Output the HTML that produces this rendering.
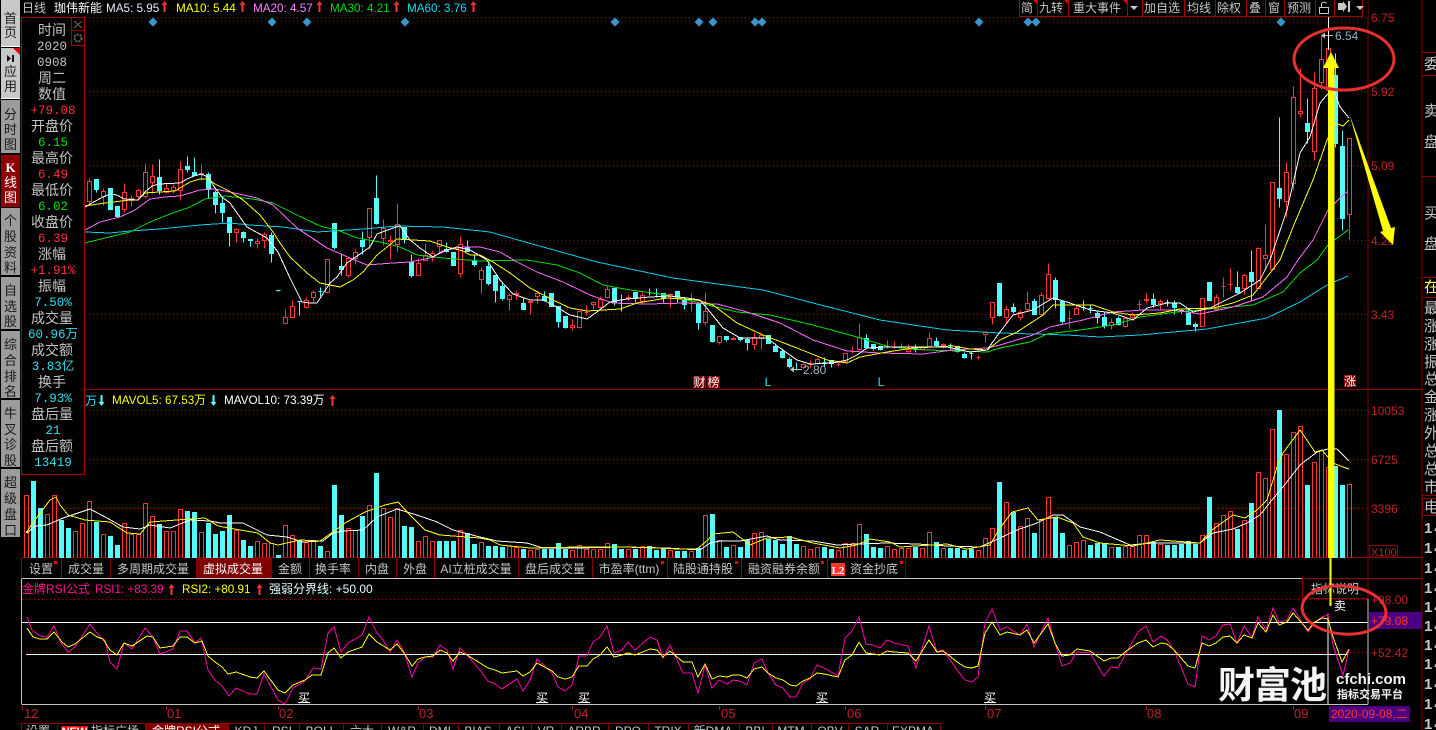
<!DOCTYPE html>
<html><head><meta charset="utf-8"><title>K线</title>
<style>
html,body{margin:0;padding:0;background:#000;width:1436px;height:730px;overflow:hidden}
svg{display:block}
text{font-family:"Liberation Sans","Noto Sans CJK SC",sans-serif;font-size:12px}
.m{font-family:"Liberation Mono","Noto Sans CJK SC",monospace;font-size:12.5px}
.l{fill:#c4c4c4;font-size:14px;text-anchor:middle}
.g{fill:none;stroke:#a00000;stroke-dasharray:1 3}
.t{fill:#c8c8c8;text-anchor:middle}
.a{fill:#c42222}
.s{fill:#1a1a1a;font-size:13px;text-anchor:middle}
.c{fill:#c8c8c8;font-size:15px}
.h{font-size:11.7px}
.f{font-size:15px;font-weight:bold;letter-spacing:2px;fill:#c8c8c8}
.o{font-size:13px;fill:#c42222}
</style></head><body>
<svg width="1436" height="730" viewBox="0 0 1436 730" xmlns="http://www.w3.org/2000/svg">
<rect width="1436" height="730" fill="#000"/>

<!-- grid -->
<g transform="translate(0,.5)">
<path class="g" d="M85 17H1368M85 91H1368M85 165H1368M85 240H1368M85 314H1368M85 410H1368M85 459H1368M22 508H1368M22 599H1368M22 652H1368"/>
<path fill="none" stroke="#8c0000" d="M22 389H1422M22 557H1422M22 578H1302M1368 0V578M1422 0V730M1368 578H1422M1422 52H1436M1422 75H1436M1422 176H1436M1422 277H1436M1422 297H1436M1422 495H1436"/>
</g>

<!-- candles: red -->
<g transform="translate(.5,.5)" fill="none" stroke="#ff3434" shape-rendering="crispEdges">
<path d="M89 178V181M87 181h4V201h-4zM89 201V205M103 188V191M101 191h4V196h-4zM103 196V205M124 183V192M122 192h4V209h-4zM124 209V212M131 195V198M129 198h4V200h-4zM131 200V206M138 188V190M136 190h4V196h-4zM138 196V200M145 163V172M143 172h4V196h-4zM145 196V198M152 164V176M150 176h4V182h-4zM152 182V193M166 183V188M164 188h4V192h-4zM166 192V193M173 184V187M171 187h4V190h-4zM173 190V193M180 161V169M178 169h4V190h-4zM180 190V200M201 164V173M199 173h4V174h-4zM201 174V180M236 228V229M234 229h4V232h-4zM236 232V242M257 238V241M255 241h4V243h-4zM257 243V248M264 232V234M262 234h4V240h-4zM264 240V248"/>
<path d="M285 309V317M283 317h4V323h-4zM292 300V306M290 306h4V317h-4zM306 297V300M304 300h4V307h-4zM306 307V308M313 290V292M311 292h4V297h-4zM313 297V302M325 259h4V292h-4zM346 258h4V275h-4zM348 275V277M355 249V252M353 252h4V258h-4zM355 258V264M367 208h4V237h-4zM369 237V249M383 219V228M381 228h4V238h-4zM383 238V245M390 235V240M388 240h4V241h-4zM390 241V259M397 203V224M395 224h4V244h-4zM397 244V252M418 258V263M416 263h4V275h-4zM425 243V255M423 255h4V260h-4zM425 260V261M432 250V253M430 253h4V257h-4zM432 257V261M437 240h4V246h-4zM439 246V252M460 236V244M458 244h4V273h-4zM460 273V277M481 267V270M479 270h4V279h-4zM481 279V293M509 293V295M507 295h4V299h-4zM509 299V310M516 290V293M514 293h4V294h-4zM516 294V299M528 301h4V302h-4zM530 302V314M537 292V293M535 293h4V296h-4zM537 296V303"/>
<path d="M572 319V325M570 325h4V327h-4zM572 327V330M577 311h4V327h-4zM579 327V328M586 305V312M584 312h4V312h-4zM586 312V315M593 301V302M591 302h4V304h-4zM593 304V309M600 296V299M598 299h4V307h-4zM600 307V309M607 285V289M605 289h4V297h-4zM607 297V298M628 294V297M626 297h4V298h-4zM628 298V300M642 292V295M640 295h4V301h-4zM642 301V304M670 293V294M668 294h4V296h-4zM670 296V307M691 293V303M689 303h4V303h-4zM691 303V311M705 292V311M703 311h4V322h-4zM705 322V325M717 336h4V342h-4zM719 342V344M733 336V338M731 338h4V339h-4zM754 332V337M752 337h4V344h-4zM754 344V349M761 333V335M759 335h4V338h-4zM761 338V349M803 363V364M801 364h4V367h-4zM803 367V369M810 360V364M808 364h4V364h-4zM810 364V368M817 357V359M815 359h4V363h-4zM817 363V364M838 362V364M836 364h4V364h-4zM838 364V366M843 353h4V361h-4zM845 361V363M852 346V351M850 351h4V351h-4zM852 351V353M859 323V337M857 337h4V349h-4zM859 349V350M887 340V346M885 346h4V346h-4zM887 346V348M894 341V347M892 347h4V347h-4zM894 347V348M901 343V347M899 347h4V347h-4zM901 347V348M908 344V349M906 349h4V351h-4zM908 351V353M920 347h4V349h-4zM922 349V350M929 332V338M927 338h4V346h-4zM929 346V347M943 343V344M941 344h4V345h-4zM943 345V348M978 355V357M976 357h4V357h-4zM978 357V359M983 332h4V334h-4zM985 334V342M990 302h4V317h-4zM992 317V324"/>
<path d="M1006 305V309M1004 309h4V317h-4zM1006 317V322M1020 310V312M1018 312h4V317h-4zM1020 317V320M1027 291V303M1025 303h4V309h-4zM1027 309V310M1041 292V295M1039 295h4V314h-4zM1048 263V274M1046 274h4V298h-4zM1048 298V299M1069 310V318M1067 318h4V318h-4zM1069 318V328M1076 305V308M1074 308h4V314h-4zM1111 318V322M1109 322h4V325h-4zM1111 325V329M1125 317V318M1123 318h4V326h-4zM1125 326V327M1132 312V314M1130 314h4V317h-4zM1132 317V319M1139 300V304M1137 304h4V304h-4zM1139 304V309M1146 293V299M1144 299h4V300h-4zM1146 300V303M1160 299V301M1158 301h4V303h-4zM1160 303V309M1200 298h4V326h-4zM1216 294V297M1214 297h4V309h-4zM1223 277V286M1221 286h4V286h-4zM1223 286V297M1230 268V284M1228 284h4V284h-4zM1230 284V290M1244 273V275M1242 275h4V288h-4zM1244 288V294M1258 247V248M1256 248h4V288h-4zM1265 224V255M1263 255h4V258h-4zM1265 258V270M1270 182h4V269h-4zM1286 162V172M1284 172h4V201h-4zM1286 201V217M1293 86V97M1291 97h4V183h-4zM1293 183V190M1300 68V111M1298 111h4V113h-4zM1300 113V117M1314 72V88M1312 88h4V151h-4zM1314 151V160M1321 35V59M1319 59h4V82h-4zM1321 82V89M1328 35V48M1326 48h4V90h-4zM1347 138h4V214h-4zM1349 214V239"/>
</g>
<!-- candles: cyan -->
<g transform="translate(.5,.5)" fill="#54fcfc" stroke="#54fcfc" shape-rendering="crispEdges">
<path d="M96 179V192M94 179h4V189h-4zM110 188V210M108 188h4V209h-4zM117 206V216M115 206h4V216h-4zM159 159V194M157 177h4V190h-4zM187 156V172M185 166h4V169h-4zM194 157V176M192 172h4V175h-4zM208 172V198M206 174h4V189h-4zM215 190V213M213 192h4V204h-4zM222 197V222M220 203h4V212h-4zM229 217V246M227 217h4V232h-4zM243 231V242M241 232h4V237h-4zM250 239V246M248 239h4V240h-4zM271 232V262M269 235h4V253h-4zM278 290V291M276 290h4V290h-4zM299 301V315M297 301h4V301h-4zM320 287V296M318 291h4V291h-4zM334 223V249M332 223h4V247h-4zM341 254V275M339 266h4V269h-4zM362 231V254M360 240h4V246h-4zM376 175V224M374 198h4V223h-4zM404 227V243M402 227h4V239h-4zM411 254V277M409 262h4V275h-4zM446 242V252M444 249h4V251h-4zM453 252V265M451 252h4V265h-4zM467 240V251M465 247h4V251h-4zM474 255V266M472 261h4V264h-4zM488 263V285M486 266h4V283h-4zM495 275V302M493 275h4V290h-4zM502 282V300M500 286h4V298h-4zM523 297V309M521 303h4V309h-4z"/>
<path d="M544 291V301M542 296h4V300h-4zM551 293V306M549 293h4V306h-4zM558 306V327M556 306h4V321h-4zM565 316V328M563 316h4V327h-4zM614 288V305M612 288h4V302h-4zM621 294V311M619 303h4V303h-4zM635 292V302M633 292h4V298h-4zM649 288V295M647 292h4V292h-4zM656 288V297M654 293h4V293h-4zM663 293V302M661 293h4V298h-4zM677 291V302M675 291h4V297h-4zM684 297V309M682 300h4V304h-4zM698 303V329M696 303h4V322h-4zM712 325V342M710 325h4V341h-4zM726 336V341M724 336h4V339h-4zM740 337V341M738 337h4V339h-4zM747 337V350M745 339h4V342h-4zM768 335V343M766 335h4V343h-4zM775 343V351M773 346h4V351h-4zM782 348V358M780 351h4V357h-4zM789 357V368M787 359h4V366h-4zM796 362V370M794 369h4V369h-4zM824 357V366M822 362h4V362h-4zM831 360V367M829 360h4V363h-4zM866 334V348M864 338h4V347h-4zM873 344V350M871 344h4V348h-4zM880 345V350M878 346h4V349h-4zM915 344V352M913 349h4V349h-4zM936 337V346M934 341h4V345h-4zM950 343V349M948 345h4V345h-4zM957 346V352M955 346h4V351h-4zM964 352V358M962 354h4V357h-4zM971 351V359M969 353h4V353h-4zM999 283V316M997 283h4V315h-4z"/>
<path d="M1013 303V313M1011 307h4V311h-4zM1034 298V314M1032 301h4V314h-4zM1055 277V308M1053 280h4V299h-4zM1062 301V323M1060 301h4V321h-4zM1083 300V310M1081 307h4V307h-4zM1090 305V313M1088 308h4V308h-4zM1097 310V323M1095 313h4V317h-4zM1104 312V328M1102 317h4V325h-4zM1118 316V325M1116 318h4V324h-4zM1153 293V307M1151 299h4V304h-4zM1167 299V306M1165 302h4V302h-4zM1174 300V314M1172 303h4V307h-4zM1181 308V313M1179 310h4V311h-4zM1188 308V324M1186 313h4V324h-4zM1195 322V331M1193 324h4V326h-4zM1209 282V300M1207 282h4V300h-4zM1237 271V293M1235 287h4V292h-4zM1251 250V300M1249 272h4V281h-4zM1279 117V207M1277 188h4V198h-4zM1307 98V143M1305 123h4V131h-4zM1335 53V147M1333 75h4V143h-4zM1342 130V230M1340 146h4V218h-4z"/>
</g>

<!-- MA lines -->
<g fill="none" stroke-width="1" shape-rendering="crispEdges">
<path stroke="#00ccee" d="M85 232L110 233 130 231 160 229 200 225 230 223 250 225 283 227 317 232 363 229 397 226 443 227 490 232 518 240 597 262 673 278 763 290 813 303 880 320 947 330 1000 333 1033 334 1067 335 1100 337 1140 335 1173 332 1207 329 1267 318 1300 302 1327 285 1348 276"/>
<path stroke="#00dd00" d="M85 243L105 238 130 232 150 222 170 214 190 207 205 199 225 196 253 199 273 203 297 215 320 226 340 231 357 238 380 242 400 247 417 255 443 258 480 261 527 260 557 265 580 273 603 285 630 290 667 295 700 303 737 312 770 315 813 325 857 337 890 347 927 350 960 351 987 352 1000 348 1030 342 1047 334 1080 330 1113 325 1140 317 1177 312 1220 308 1253 305 1283 292 1300 273 1317 260 1328 245 1348 230"/>
<path stroke="#ff66ff" d="M85 230L100 222 120 217 135 210 150 199 165 197 180 196 200 190 215 189 230 192 257 198 273 205 297 228 327 248 350 258 367 265 393 263 410 262 430 258 447 250 463 247 480 247 500 252 517 262 537 272 563 282 590 295 613 303 647 304 687 303 717 304 747 312 780 323 813 340 847 351 880 353 923 354 953 350 987 348 1000 345 1033 335 1050 327 1083 320 1113 312 1143 310 1173 310 1200 314 1233 307 1263 297 1287 277 1298 260 1313 240 1328 210 1340 198 1348 191"/>
<path stroke="#ffff00" d="M85 206L105 203 130 200 138 200 145 193 159 192 175 191 180 188 190 182 200 179 208 179 215 184 229 191 243 200 260 215 273 232 280 243 290 257 307 273 320 283 340 287 353 280 363 272 377 255 397 239 430 241 447 247 463 251 470 255 480 255 493 262 510 273 530 288 553 300 570 308 587 311 620 309 637 303 667 298 697 300 713 305 737 323 763 335 797 348 827 360 847 363 860 357 887 352 913 348 953 346 970 349 987 350 1000 340 1017 332 1043 315 1053 305 1067 305 1093 305 1113 312 1133 315 1160 313 1180 309 1213 308 1233 303 1253 295 1267 277 1280 260 1293 227 1313 180 1327 140 1335 123 1343 126 1349 120"/>
<path stroke="#ffffff" d="M85 207L92 203 103 197 110 194 117 195 124 199 138 200 145 192 152 186 159 184 180 183 187 179 194 176 201 174 208 177 215 188 222 197 230 203 247 227 267 238 278 252 290 278 302 302 310 303 317 303 330 283 337 277 347 263 360 254 370 247 377 234 393 228 400 226 410 240 420 248 433 257 443 251 457 247 470 250 487 260 500 280 513 294 530 300 543 300 553 305 570 315 587 319 597 312 610 302 627 299 650 297 670 296 687 298 700 300 710 312 723 328 740 338 767 338 780 348 797 360 810 364 833 363 847 360 857 355 867 348 883 347 913 347 947 347 970 352 987 350 1000 332 1013 315 1033 310 1053 298 1067 302 1090 310 1113 313 1133 320 1147 308 1167 303 1180 303 1193 312 1210 308 1220 303 1240 293 1260 280 1270 260 1287 210 1300 153 1310 137 1320 103 1333 88 1340 107 1349 118"/>
</g>

<!-- volume bars red -->
<g transform="translate(.5,.5)" fill="none" stroke="#ff3434" shape-rendering="crispEdges">
<path d="M24 495h4V557M24 557V495M45 514h4V557M45 557V514M52 495h4V557M52 557V495M73 531h4V557M73 557V531M80 523h4V557M80 557V523M87 501h4V557M87 557V501M101 534h4V557M101 557V534M122 523h4V557M122 557V523M129 534h4V557M129 557V534M136 534h4V557M136 557V534M143 503h4V557M143 557V503M150 516h4V557M150 557V516M164 531h4V557M164 557V531M171 531h4V557M171 557V531M178 509h4V557M178 557V509M199 532h4V557M199 557V532M234 530h4V557M234 557V530M255 541h4V557M255 557V541M262 543h4V557M262 557V543M269 543h4V557M269 557V543M283 525h4V557M283 557V525M290 535h4V557M290 557V535M304 542h4V557M304 557V542M311 540h4V557M311 557V540M325 551h4V557M325 557V551M346 528h4V557M346 557V528M353 530h4V557M353 557V530M367 505h4V557M367 557V505M381 508h4V557M381 557V508M388 517h4V557M388 557V517M395 508h4V557M395 557V508M416 541h4V557M416 557V541M423 536h4V557M423 557V536M430 541h4V557M430 557V541M458 530h4V557M458 557V530M479 542h4V557M479 557V542M507 546h4V557M507 557V546M514 547h4V557M514 557V547M528 550h4V557M528 557V550M535 549h4V557M535 557V549M570 550h4V557M570 557V550M577 545h4V557M577 557V545M584 549h4V557M584 557V549M591 549h4V557M591 557V549M598 549h4V557M598 557V549M605 543h4V557M605 557V543M626 549h4V557M626 557V549M640 546h4V557M640 557V546M668 550h4V557M668 557V550M689 551h4V557M689 557V551M703 515h4V557M703 557V515M717 540h4V557M717 557V540M731 545h4V557M731 557V545M752 533h4V557M752 557V533M759 532h4V557M759 557V532M801 546h4V557M801 557V546M808 549h4V557M808 557V549M815 547h4V557M815 557V547M836 550h4V557M836 557V550M843 543h4V557M843 557V543M850 543h4V557M850 557V543M857 524h4V557M857 557V524M885 546h4V557M885 557V546M892 549h4V557M892 557V549M899 548h4V557M899 557V548M906 548h4V557M906 557V548M920 548h4V557M920 557V548M927 532h4V557M927 557V532M941 548h4V557M941 557V548M976 550h4V557M976 557V550M983 538h4V557M983 557V538M990 528h4V557M990 557V528"/>
<path d="M1004 502h4V557M1004 557V502M1018 526h4V557M1018 557V526M1025 518h4V557M1025 557V518M1039 520h4V557M1039 557V520M1046 497h4V557M1046 557V497M1067 545h4V557M1067 557V545M1074 542h4V557M1074 557V542M1081 540h4V557M1081 557V540M1109 547h4V557M1109 557V547M1123 546h4V557M1123 557V546M1130 546h4V557M1130 557V546M1137 535h4V557M1137 557V535M1144 535h4V557M1144 557V535M1158 544h4V557M1158 557V544M1200 535h4V557M1200 557V535M1214 523h4V557M1214 557V523M1221 515h4V557M1221 557V515M1228 511h4V557M1228 557V511M1242 520h4V557M1242 557V520M1256 472h4V557M1256 557V472M1263 478h4V557M1263 557V478M1270 429h4V557M1270 557V429M1284 454h4V557M1284 557V454M1291 432h4V557M1291 557V432M1298 426h4V557M1298 557V426M1312 462h4V557M1312 557V462M1319 450h4V557M1319 557V450M1326 467h4V557M1326 557V467M1347 484h4V557M1347 557V484"/>
</g>
<!-- volume bars cyan -->
<g fill="#54fcfc">
<path d="M31 481h5V558h-5zM38 508h5V558h-5zM59 520h5V558h-5zM66 528h5V558h-5zM94 522h5V558h-5zM108 536h5V558h-5zM115 545h5V558h-5zM157 524h5V558h-5zM185 511h5V558h-5zM192 512h5V558h-5zM206 523h5V558h-5zM213 534h5V558h-5zM220 531h5V558h-5zM227 515h5V558h-5zM241 540h5V558h-5zM248 546h5V558h-5zM276 555h5V558h-5zM297 540h5V558h-5zM318 546h5V558h-5zM332 485h5V558h-5zM339 515h5V558h-5zM360 516h5V558h-5zM374 473h5V558h-5zM402 526h5V558h-5zM409 527h5V558h-5zM437 541h5V558h-5zM444 541h5V558h-5zM451 541h5V558h-5zM465 533h5V558h-5zM472 544h5V558h-5zM486 546h5V558h-5zM493 546h5V558h-5zM500 547h5V558h-5zM521 549h5V558h-5zM542 549h5V558h-5zM549 549h5V558h-5zM556 543h5V558h-5zM563 549h5V558h-5zM612 544h5V558h-5zM619 549h5V558h-5zM633 549h5V558h-5zM647 546h5V558h-5zM654 550h5V558h-5zM661 549h5V558h-5zM675 551h5V558h-5zM682 551h5V558h-5zM696 548h5V558h-5zM710 514h5V558h-5zM724 547h5V558h-5zM738 547h5V558h-5zM745 540h5V558h-5zM766 539h5V558h-5zM773 540h5V558h-5zM780 544h5V558h-5zM787 536h5V558h-5zM794 544h5V558h-5zM822 547h5V558h-5zM829 549h5V558h-5zM864 534h5V558h-5zM871 547h5V558h-5zM878 548h5V558h-5zM913 547h5V558h-5zM934 542h5V558h-5zM948 548h5V558h-5zM955 548h5V558h-5zM962 550h5V558h-5zM969 549h5V558h-5zM997 482h5V558h-5zM1011 512h5V558h-5zM1032 533h5V558h-5zM1053 517h5V558h-5zM1060 533h5V558h-5zM1088 545h5V558h-5zM1095 543h5V558h-5zM1102 543h5V558h-5zM1116 547h5V558h-5zM1151 542h5V558h-5zM1165 545h5V558h-5zM1172 545h5V558h-5zM1179 544h5V558h-5zM1186 541h5V558h-5zM1193 544h5V558h-5zM1207 497h5V558h-5zM1235 529h5V558h-5zM1249 503h5V558h-5zM1277 410h5V558h-5zM1305 485h5V558h-5zM1333 466h5V558h-5zM1340 485h5V558h-5z"/>
</g>
<!-- volume MAs -->
<g fill="none" stroke-width="1" shape-rendering="crispEdges">
<path stroke="#fff" d="M27 533L35 526 47 525 63 518 90 509 107 518 123 527 140 529 150 525 170 528 190 520 210 521 220 523 243 523 267 535 287 537 303 542 323 541 333 533 343 531 363 530 377 517 397 509 417 515 437 522 453 530 480 537 497 541 527 543 543 548 580 548 620 547 667 548 700 550 710 543 720 541 740 541 767 536 780 540 813 541 837 545 857 544 887 543 917 544 947 546 980 547 1000 538 1017 530 1037 523 1053 515 1063 515 1080 527 1100 532 1130 545 1153 543 1200 543 1213 533 1233 529 1247 523 1260 515 1272 500 1283 487 1300 465 1317 452 1328 449 1337 449 1349 461"/>
<path stroke="#ffff00" d="M26 533L35 520 50 500 56 497 60 505 68 515 85 520 110 522 127 533 140 534 150 522 190 519 205 518 218 526 240 530 258 533 270 543 278 545 300 540 320 541 333 532 345 523 365 512 385 505 398 502 410 515 425 530 440 535 480 538 490 540 500 545 530 548 580 547 630 547 680 549 697 549 708 540 713 534 733 532 750 545 767 538 790 537 813 543 840 548 857 545 870 539 890 542 900 547 947 544 967 549 990 545 1000 528 1012 512 1028 508 1038 520 1057 517 1073 523 1083 537 1100 543 1133 546 1160 540 1200 543 1212 530 1233 515 1245 518 1257 510 1267 500 1277 467 1283 453 1300 430 1315 452 1322 450 1333 463 1343 467 1349 469"/>
</g>

<!-- RSI panel -->
<g transform="translate(0,.5)" shape-rendering="crispEdges">
<path fill="none" stroke="#fff" d="M22 622H1368"/>
<path fill="none" stroke="#d8ffff" d="M26 654H1348"/>
<path fill="none" stroke="#c4c4c4" d="M22 578H1302M21.500 578V704M22 704H1368M1368 598V704"/>
<path fill="none" stroke="#fff" d="M1328 613V704"/>
</g>
<g fill="none" stroke-width="1" shape-rendering="crispEdges">
<path stroke="#ff00aa" d="M27 617L32 630 40 636 47 637 54 626 61 643 68 652 75 647 90 624 100 637 105 640 110 662 117 669 124 643 132 649 145 628 153 637 160 654 173 649 180 631 187 631 195 643 201 638 208 670 215 680 222 686 229 696 236 688 250 694 257 694 264 674 278 700 285 704 293 688 305 681 313 668 321 669 328 633 334 627 341 652 348 643 362 635 369 617 377 633 383 640 390 652 397 640 404 652 412 677 418 663 425 657 433 657 440 645 447 650 453 669 460 648 467 655 480 670 488 681 495 684 502 689 517 679 523 691 530 680 537 659 552 673 558 687 565 691 572 685 579 656 587 656 593 642 600 637 607 626 614 653 622 650 628 642 635 650 650 637 657 640 663 658 670 645 683 673 692 673 698 693 705 665 712 688 719 680 727 684 733 680 740 681 747 685 754 663 762 659 768 673 776 685 783 688 790 697 796 697 803 683 810 679 817 665 824 668 838 676 845 638 852 631 859 617 866 644 873 645 880 648 887 640 894 643 908 646 916 668 929 626 937 652 943 650 951 661 957 670 965 680 972 682 978 677 985 623 992 609 1000 630 1007 627 1020 635 1027 624 1034 647 1048 618 1055 643 1062 666 1070 663 1077 652 1090 653 1104 676 1111 667 1118 668 1125 655 1138 632 1146 626 1153 642 1161 636 1167 640 1174 650 1188 684 1195 687 1202 636 1209 640 1216 636 1223 625 1230 624 1237 643 1244 626 1252 637 1258 617 1266 630 1273 608 1279 622 1287 620 1293 608 1308 632 1315 622 1322 617 1328 615 1333 645 1343 675 1349 650"/>
<path stroke="#ffff00" d="M27 628L33 637 40 639 47 639 54 632 62 642 68 647 75 644 90 632 97 637 103 639 110 650 117 655 124 643 132 646 147 636 153 637 160 648 173 646 180 637 187 637 195 643 202 641 208 656 215 662 222 667 228 674 236 672 250 677 257 678 264 671 278 690 285 693 293 685 305 680 312 675 321 675 328 653 334 648 341 658 348 652 362 647 369 634 377 642 390 650 397 644 404 653 412 666 418 659 425 657 433 656 440 650 447 653 453 661 460 652 467 655 480 663 488 668 495 670 502 673 517 671 523 676 530 672 537 663 552 671 558 677 565 679 572 677 579 666 587 666 593 659 600 655 607 647 614 657 622 655 628 653 635 655 650 649 657 650 663 657 670 651 683 662 692 662 698 677 705 664 712 679 719 676 727 677 733 675 740 675 747 678 754 669 762 667 768 673 776 678 783 680 790 685 796 686 803 681 810 678 817 673 824 674 838 677 845 660 852 655 859 642 866 653 873 654 880 655 887 651 894 652 908 653 916 661 929 640 937 652 943 651 951 657 957 662 965 667 972 668 978 666 985 633 992 622 1000 635 1007 632 1020 635 1027 630 1034 643 1048 624 1055 643 1062 656 1070 655 1077 649 1090 651 1104 661 1111 658 1118 658 1125 652 1138 643 1146 640 1153 647 1161 643 1167 644 1174 650 1188 666 1195 668 1202 643 1209 646 1216 643 1223 637 1230 636 1237 643 1244 635 1252 638 1258 623 1266 632 1273 615 1279 625 1287 622 1293 613 1308 630 1315 622 1322 618 1328 619 1333 637 1342 662 1349 649"/>
</g>

<!-- signal diamonds -->
<path fill="#3399cc" d="M153 17.500l4.500 4.500-4.500 4.500-4.500-4.500zM272 17.500l4.500 4.500-4.500 4.500-4.500-4.500zM307 17.500l4.500 4.500-4.500 4.500-4.500-4.500zM405 17.500l4.500 4.500-4.500 4.500-4.500-4.500zM615 17.500l4.500 4.500-4.500 4.500-4.500-4.500zM699 17.500l4.500 4.500-4.500 4.500-4.500-4.500zM713 17.500l4.500 4.500-4.500 4.500-4.500-4.500zM755 17.500l4.500 4.500-4.500 4.500-4.500-4.500zM762 17.500l4.500 4.500-4.500 4.500-4.500-4.500zM979 17.500l4.500 4.500-4.500 4.500-4.500-4.500zM1028 17.500l4.500 4.500-4.500 4.500-4.500-4.500zM1036 17.500l4.500 4.500-4.500 4.500-4.500-4.500zM1281 17.500l4.500 4.500-4.500 4.500-4.500-4.500z"/>

<!-- top legend -->
<rect x="0" y="0" width="1010" height="16" fill="#000"/>
<text x="22" y="12" fill="#c8c8c8">日线</text>
<text x="54" y="12" fill="#fff">珈伟新能</text>
<text class="h" x="106" y="12" fill="#e8e8ff">MA5: 5.95</text>
<text class="h" x="176" y="12" fill="#ffff00">MA10: 5.44</text>
<text class="h" x="253" y="12" fill="#ff80ff">MA20: 4.57</text>
<text class="h" x="330" y="12" fill="#00dd00">MA30: 4.21</text>
<text class="h" x="407" y="12" fill="#00e0f0">MA60: 3.76</text>
<path fill="#ff3232" d="M164.500 1l3 4h-2v7h-2v-7h-2zM242.500 1l3 4h-2v7h-2v-7h-2zM319.500 1l3 4h-2v7h-2v-7h-2zM396.500 1l3 4h-2v7h-2v-7h-2zM473.500 1l3 4h-2v7h-2v-7h-2zM171.500 584l3 4h-2v7h-2v-7h-2zM259.500 584l3 4h-2v7h-2v-7h-2zM332.500 395l3 4h-2v7h-2v-7h-2z"/>
<path fill="#54fcfc" d="M101.500 406l-3-4h2v-7h2v7h2zM213.500 406l-3-4h2v-7h2v7h2z"/>

<!-- volume legend -->
<text x="85" y="405" fill="#2de0f0">万</text>
<text class="h" x="112" y="404" fill="#ffff00">MAVOL5: 67.53万</text>
<text class="h" x="224" y="404" fill="#fff">MAVOL10: 73.39万</text>

<!-- RSI legend -->
<text x="22" y="593" fill="#ff1493">金牌RSI公式</text>
<text class="h" x="95" y="593" fill="#ff1493">RSI1: +83.39</text>
<text class="h" x="182" y="593" fill="#ffff00">RSI2: +80.91</text>
<text x="269" y="593" fill="#e8ffff">强弱分界线: +50.00</text>

<!-- left sidebar -->
<g>
<rect x="1" y="0" width="19" height="46" fill="#c8c8c8"/>
<rect x="1" y="48" width="19" height="50" fill="#c8c8c8"/>
<rect x="1" y="100" width="19" height="53" fill="#9c9c9c"/>
<rect x="1" y="155" width="19" height="52" fill="#8c0000"/>
<rect x="1" y="208" width="19" height="67" fill="#9c9c9c"/>
<rect x="1" y="277" width="19" height="52" fill="#9c9c9c"/>
<rect x="1" y="331" width="19" height="67" fill="#9c9c9c"/>
<rect x="1" y="400" width="19" height="67" fill="#9c9c9c"/>
<rect x="1" y="469" width="19" height="68" fill="#9c9c9c"/>
<path fill="#fff" d="M1 46h19v1H1zM1 98h19v1H1z"/>
<path fill="#e00000" d="M13 48h7v7z"/>
<path fill="#111" d="M7 55l4 3.500-4 3.500zM12 55h2v7h-2z"/>
<text class="s" x="10.500" y="23">首</text><text class="s" x="10.500" y="37">页</text>
<text class="s" x="10.500" y="76">应</text><text class="s" x="10.500" y="91">用</text>
<text class="s" x="10.500" y="119">分</text><text class="s" x="10.500" y="134">时</text><text class="s" x="10.500" y="149">图</text>
<text x="10.500" y="172" fill="#fff" text-anchor="middle" style="font-family:'Liberation Serif',serif;font-size:13px;font-weight:bold">K</text>
<text class="s" x="10.500" y="187" style="fill:#fff">线</text><text class="s" x="10.500" y="202" style="fill:#fff">图</text>
<text class="s" x="10.500" y="225">个</text><text class="s" x="10.500" y="241">股</text><text class="s" x="10.500" y="257">资</text><text class="s" x="10.500" y="272">料</text>
<text class="s" x="10.500" y="295">自</text><text class="s" x="10.500" y="311">选</text><text class="s" x="10.500" y="326">股</text>
<text class="s" x="10.500" y="349">综</text><text class="s" x="10.500" y="365">合</text><text class="s" x="10.500" y="381">排</text><text class="s" x="10.500" y="396">名</text>
<text class="s" x="10.500" y="418">牛</text><text class="s" x="10.500" y="434">叉</text><text class="s" x="10.500" y="449">诊</text><text class="s" x="10.500" y="465">股</text>
<text class="s" x="10.500" y="487">超</text><text class="s" x="10.500" y="503">级</text><text class="s" x="10.500" y="519">盘</text><text class="s" x="10.500" y="535">口</text>
</g>

<!-- info panel -->
<rect x="21.500" y="17.500" width="63" height="457" fill="#000" stroke="#b00000"/>
<path fill="none" stroke="#a00000" d="M71.500 18v27.500h13M71.500 30.500h13"/>
<path stroke="#666" fill="none" d="M74 21l8 7M82 21l-8 7"/>
<circle cx="78" cy="38" r="3.500" fill="none" stroke="#666" stroke-width="2" stroke-dasharray="2 1"/>
<g>
<text class="l" x="52" y="35">时间</text>
<text class="m" x="52" y="50" text-anchor="middle" fill="#c4c4c4">2020</text>
<text class="m" x="52" y="66" text-anchor="middle" fill="#c4c4c4">0908</text>
<text class="l" x="52" y="83">周二</text>
<text class="l" x="52" y="99">数值</text>
<text class="m" x="53" y="114" text-anchor="middle" fill="#ff3232">+79.08</text>
<text class="l" x="52" y="131">开盘价</text>
<text class="m" x="53" y="146" text-anchor="middle" fill="#00e000">6.15</text>
<text class="l" x="52" y="163">最高价</text>
<text class="m" x="53" y="178" text-anchor="middle" fill="#ff3232">6.49</text>
<text class="l" x="52" y="195">最低价</text>
<text class="m" x="53" y="210" text-anchor="middle" fill="#00e000">6.02</text>
<text class="l" x="52" y="227">收盘价</text>
<text class="m" x="53" y="242" text-anchor="middle" fill="#ff3232">6.39</text>
<text class="l" x="52" y="259">涨幅</text>
<text class="m" x="53" y="274" text-anchor="middle" fill="#ff3232">+1.91%</text>
<text class="l" x="52" y="291">振幅</text>
<text class="m" x="53" y="306" text-anchor="middle" fill="#2de0f0">7.50%</text>
<text class="l" x="52" y="323">成交量</text>
<text class="m" x="53" y="338" text-anchor="middle" fill="#2de0f0">60.96万</text>
<text class="l" x="52" y="355">成交额</text>
<text class="m" x="53" y="370" text-anchor="middle" fill="#2de0f0">3.83亿</text>
<text class="l" x="52" y="387">换手</text>
<text class="m" x="53" y="402" text-anchor="middle" fill="#2de0f0">7.93%</text>
<text class="l" x="52" y="419">盘后量</text>
<text class="m" x="53" y="434" text-anchor="middle" fill="#2de0f0">21</text>
<text class="l" x="52" y="451">盘后额</text>
<text class="m" x="53" y="466" text-anchor="middle" fill="#2de0f0">13419</text>
</g>

<!-- tab row 1 -->
<rect x="196" y="558" width="75" height="20" fill="#800000"/>
<path fill="none" stroke="#8c0000" d="M21.500 558V578M61.500 558V578M110.500 558V578M196.500 558V578M271.500 558V578M309.500 558V578M358.500 558V578M396.500 558V578M434.500 558V578M518.500 558V578M592.500 558V578M667.500 558V578M741.500 558V578M827.500 558V578M905.500 558V578"/>
<g>
<text class="t" x="41" y="573">设置</text>
<text class="t" x="86" y="573">成交量</text>
<text class="t" x="153" y="573">多周期成交量</text>
<text class="t" x="233" y="573" style="fill:#fff">虚拟成交量</text>
<text class="t" x="290" y="573">金额</text>
<text class="t" x="333" y="573">换手率</text>
<text class="t" x="377" y="573">内盘</text>
<text class="t" x="415" y="573">外盘</text>
<text class="t" x="476" y="573">AI立桩成交量</text>
<text class="t" x="555" y="573">盘后成交量</text>
<text class="t" x="629" y="573">市盈率(ttm)</text>
<text class="t" x="703" y="573">陆股通持股</text>
<text class="t" x="784" y="573">融资融券余额</text>
<rect x="831" y="563" width="14" height="13" fill="#f33"/>
<text x="838" y="574" fill="#fff" text-anchor="middle" style="font-family:'Liberation Serif',serif;font-size:11px;font-weight:bold">L2</text>
<text class="t" x="874" y="573">资金抄底</text>
</g>
<path fill="#f00000" d="M54 561h3v3h-3zM661 561h3v3h-3zM735 561h3v3h-3zM821 561h3v3h-3zM900 561h3v3h-3z"/>

<!-- month axis -->
<path stroke="#a02020" fill="none" d="M22.500 706v4M166.500 706v4M278.500 706v4M418.500 706v4M572.500 706v4M719.500 706v4M845.500 706v4M985.500 706v4M1146.500 706v4M1293.500 706v4"/>
<g>
<text class="o" x="24" y="718">12</text>
<text class="o" x="167" y="718">01</text>
<text class="o" x="279" y="718">02</text>
<text class="o" x="419" y="718">03</text>
<text class="o" x="574" y="718">04</text>
<text class="o" x="721" y="718">05</text>
<text class="o" x="847" y="718">06</text>
<text class="o" x="987" y="718">07</text>
<text class="o" x="1147" y="718">08</text>
<text class="o" x="1294" y="718">09</text>
</g>

<!-- bottom tab row -->
<rect x="145" y="724" width="83" height="6" fill="#800000"/>
<rect x="61" y="726" width="27" height="4" fill="#f00000"/>
<text x="74.500" y="735" fill="#fff" text-anchor="middle" style="font-size:11px;font-weight:bold">NEW</text>
<path fill="none" stroke="#8c0000" d="M22 723.500H940M21.500 723V730M57.500 723V730M145.500 723V730M228.500 723V730M264.500 723V730M299.500 723V730M343.500 723V730M381.500 723V730M423.500 723V730M458.500 723V730M499.500 723V730M531.500 723V730M561.500 723V730M608.500 723V730M648.500 723V730M688.500 723V730M739.500 723V730M772.500 723V730M811.500 723V730M848.500 723V730M887.500 723V730M940.500 723V730"/>
<g>
<text class="t" x="38" y="735">设置</text>
<text class="t" x="115" y="735">指标广场</text>
<text class="t" x="186" y="735" style="fill:#fff">金牌RSI公式</text>
<text class="t" x="246" y="735">KDJ</text>
<text class="t" x="282" y="735">RSI</text>
<text class="t" x="321" y="735">BOLL</text>
<text class="t" x="362" y="735">六大</text>
<text class="t" x="402" y="735">W&amp;R</text>
<text class="t" x="440" y="735">DMI</text>
<text class="t" x="478" y="735">BIAS</text>
<text class="t" x="515" y="735">ASI</text>
<text class="t" x="546" y="735">VR</text>
<text class="t" x="584" y="735">ARBR</text>
<text class="t" x="628" y="735">DPO</text>
<text class="t" x="668" y="735">TRIX</text>
<text class="t" x="713" y="735">新DMA</text>
<text class="t" x="755" y="735">BBI</text>
<text class="t" x="791" y="735">MTM</text>
<text class="t" x="830" y="735">OBV</text>
<text class="t" x="867" y="735">SAR</text>
<text class="t" x="913" y="735">EXPMA</text>
</g>

<!-- right axis labels -->
<g>
<text class="a" x="1371" y="22">6.75</text>
<text class="a" x="1371" y="96">5.92</text>
<text class="a" x="1371" y="170">5.09</text>
<text class="a" x="1371" y="245">4.26</text>
<text class="a" x="1371" y="319">3.43</text>
<text class="a" x="1371" y="415">10053</text>
<text class="a" x="1371" y="464">6725</text>
<text class="a" x="1371" y="513">3396</text>
<text class="a" x="1371" y="604">+98.00</text>
<text class="a" x="1371" y="657">+52.42</text>
</g>
<rect x="1369.500" y="545.500" width="28" height="11.500" fill="#000" stroke="#8c0000"/>
<text class="a" x="1371" y="556" style="font-size:11px">X100</text>
<rect x="1369" y="612" width="53" height="17" fill="#4b0082"/>
<text x="1371" y="625" fill="#ff3232">+79.08</text>
<rect x="1329" y="706" width="81" height="16" fill="#4b0082"/>
<text x="1331" y="718" fill="#ff3232">2020-09-08,二</text>

<!-- top-right toolbar -->
<rect x="1012" y="0" width="356" height="16" fill="#000"/>
<path fill="none" stroke="#a00000" d="M1019.500 0V16.500H1362.500V0M1037.500 0V16M1068.500 0V16M1127.500 0V16M1142.500 0V16M1184.500 0V16M1215.500 0V16M1246.500 0V16M1265.500 0V16M1284.500 0V16M1315.500 0V16M1334.500 0V16"/>
<path fill="#f00000" d="M1033 0h4v4zM1064 0h4v4zM1123 0h4v4z"/>
<text class="t" x="1027" y="12">简</text>
<text class="t" x="1051" y="12">九转</text>
<text class="t" x="1097" y="12">重大事件</text>
<path fill="#c8c8c8" d="M1130 6h8l-4 4zM1356 6h8l-4 4z"/>
<text class="t" x="1162" y="12">加自选</text>
<text class="t" x="1199" y="12">均线</text>
<text class="t" x="1229" y="12">除权</text>
<text class="t" x="1255" y="12">叠</text>
<text class="t" x="1274" y="12">窗</text>
<text class="t" x="1299" y="12">预测</text>
<path fill="none" stroke="#c8c8c8" d="M1319.500 7.500h9v6h-9zM1321.500 7V3.500a3 3 0 0 1 5 0"/>
<path fill="#c8c8c8" d="M1338 3h5V1l4 5.500-4 5.500v-2h-5zM1348 1h2v11h-2z"/>

<!-- right partial column -->
<g>
<text x="1424" y="69" class="c">委</text>
<text x="1424" y="116" class="c">卖</text>
<text x="1424" y="147" class="c">盘</text>
<text x="1424" y="218" class="c">买</text>
<text x="1424" y="249" class="c">盘</text>
<text x="1424" y="292" class="c" style="fill:#ffff66">在</text>
<text x="1424" y="313" class="c">最</text>
<text x="1424" y="331" class="c">涨</text>
<text x="1424" y="349" class="c">涨</text>
<text x="1424" y="367" class="c">振</text>
<text x="1424" y="384" class="c">总</text>
<text x="1424" y="402" class="c">金</text>
<text x="1424" y="420" class="c">涨</text>
<text x="1424" y="438" class="c">外</text>
<text x="1424" y="456" class="c">总</text>
<text x="1424" y="474" class="c">总</text>
<text x="1424" y="492" class="c">市</text>
</g>
<rect x="1422.500" y="498.500" width="20" height="17" fill="#000" stroke="#8c0000"/>
<text x="1424" y="512" class="c">电</text>
<g>
<text class="f" x="1424" y="533">14</text>
<text class="f" x="1424" y="553">14</text>
<text class="f" x="1424" y="573">14</text>
<text class="f" x="1424" y="593">14</text>
<text class="f" x="1424" y="612">14</text>
<text class="f" x="1424" y="631">14</text>
<text class="f" x="1424" y="650">14</text>
<text class="f" x="1424" y="669">14</text>
<text class="f" x="1424" y="689">14</text>
<text class="f" x="1424" y="709">14</text>
<text class="f" x="1424" y="729">14</text>
</g>

<!-- chart marks -->
<rect x="693" y="376" width="13" height="12" fill="#800000"/><rect x="707" y="376" width="13" height="12" fill="#800000"/>
<text x="699.500" y="386.500" fill="#fff" text-anchor="middle">财</text>
<text x="713.500" y="386.500" fill="#fff" text-anchor="middle">榜</text>
<text x="768" y="386" fill="#2de0f0" text-anchor="middle">L</text>
<text x="881" y="386" fill="#2de0f0" text-anchor="middle">L</text>
<rect x="1344" y="375" width="12" height="12" fill="#800000"/>
<text x="1350" y="385.500" fill="#fff" text-anchor="middle">涨</text>
<text x="1335" y="40" fill="#8fb0c4">6.54</text>
<path stroke="#c0c0c0" fill="none" d="M1322 35.500H1333"/><path fill="#c0c0c0" d="M1321 35.500l4-3v6z"/>
<text x="803" y="374" fill="#9fb4c0">2.80</text>
<path stroke="#c0c0c0" fill="none" d="M791 369.500H802"/><path fill="#c0c0c0" d="M790 369.500l4-3v6z"/>
<path stroke="#54fcfc" fill="none" d="M276 290.500H280"/>
<g fill="#fff" text-anchor="middle">
<text x="304" y="702">买</text><text x="542" y="702">买</text><text x="584" y="702">买</text><text x="822" y="702">买</text><text x="990" y="702">买</text>
</g>
<path stroke="#e8ffff" fill="none" d="M298 702.500H310M536 702.500H548M578 702.500H590M816 702.500H828M984 702.500H996"/>

<!-- cursor -->
<path stroke="#fff" fill="none" d="M1328.500 17V50"/>

<!-- 指标说明 -->
<rect x="1302.500" y="578.500" width="65.500" height="20" fill="#000" stroke="#8c0000"/>
<text x="1335" y="593" fill="#c8c8c8" text-anchor="middle">指标说明</text>
<text x="1340" y="610" fill="#fff" text-anchor="middle">卖</text>

<!-- yellow arrows -->
<path fill="#ffff00" d="M1331 52L1339 68H1334.500V558H1328V68H1323zM1329.500 558h2v48h-2z"/>
<path fill="#ffff00" d="M1349 113L1383 231 1380 232 1393 245 1395 227 1391 228z"/>

<!-- red ellipses -->
<ellipse cx="1344" cy="59" rx="50" ry="31" fill="none" stroke="#e83030" stroke-width="3"/>
<ellipse cx="1344" cy="610" rx="42" ry="24" fill="none" stroke="#e83030" stroke-width="3" transform="rotate(5 1344 610)"/>

<!-- watermark -->
<text x="1218" y="698" fill="#f4f4f4" style="font-size:37px;font-weight:bold;letter-spacing:-1px">财富池</text>
<text x="1336" y="684" fill="#f4f4f4" style="font-size:15px;font-weight:bold">cfchi.com</text>
<text x="1337" y="698" fill="#f4f4f4" style="font-size:11px;font-weight:bold">指标交易平台</text>
</svg>
</body></html>
